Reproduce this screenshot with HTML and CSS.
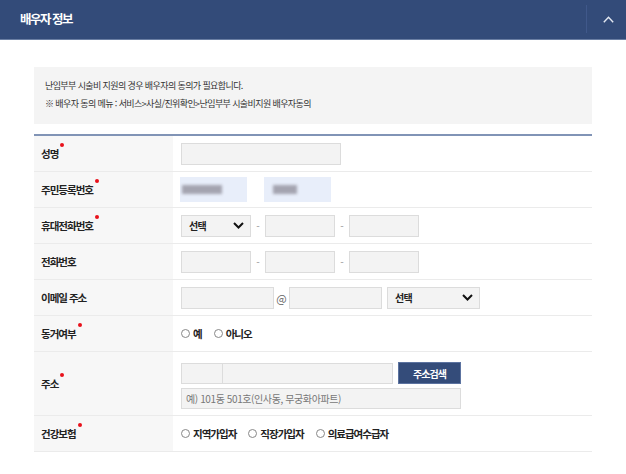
FILE: index.html
```html
<!DOCTYPE html>
<html lang="ko">
<head>
<meta charset="utf-8">
<title>배우자 정보</title>
<link rel="stylesheet" href="styles.css">
</head>
<body>
<header class="panel-head">
  <h2 class="panel-title">배우자 정보</h2>
  <div class="toggle">
    <svg width="11" height="7" viewBox="0 0 11 7"><polyline points="0.8,6.2 5.5,1.2 10.2,6.2" fill="none" stroke="#e4e9f2" stroke-width="1.4"/></svg>
  </div>
</header>
<main class="content">
  <div class="notice">
    <p>난임부부 시술비 지원의 경우 배우자의 동의가 필요합니다.</p>
    <p>※ 배우자 동의 메뉴 : 서비스&gt;사실/진위확인&gt;난임부부 시술비지원 배우자동의</p>
  </div>
  <div class="form-table">
    <div class="row">
      <div class="th"><span class="req">성명</span></div>
      <div class="td"><input class="inp w160" type="text"></div>
    </div>
    <div class="row">
      <div class="th"><span class="req">주민등록번호</span></div>
      <div class="td td-mask">
        <div class="mask"><div class="blob b1"></div></div>
        <div class="mask m2"><div class="blob b2"></div></div>
      </div>
    </div>
    <div class="row">
      <div class="th"><span class="req">휴대전화번호</span></div>
      <div class="td">
        <div class="select w70"><span>선택</span><svg width="11" height="7" viewBox="0 0 11 7"><polyline points="1,1 5.5,5.5 10,1" fill="none" stroke="#111" stroke-width="2"/></svg></div>
        <span class="dash">-</span>
        <input class="inp w70" type="text">
        <span class="dash">-</span>
        <input class="inp w70" type="text">
      </div>
    </div>
    <div class="row">
      <div class="th"><span>전화번호</span></div>
      <div class="td">
        <input class="inp w70" type="text">
        <span class="dash">-</span>
        <input class="inp w70" type="text">
        <span class="dash">-</span>
        <input class="inp w70" type="text">
      </div>
    </div>
    <div class="row">
      <div class="th"><span>이메일 주소</span></div>
      <div class="td">
        <input class="inp w93" type="text">
        <span class="at">@</span>
        <input class="inp w93" type="text">
        <div class="select w93 ml5"><span>선택</span><svg width="11" height="7" viewBox="0 0 11 7"><polyline points="1,1 5.5,5.5 10,1" fill="none" stroke="#111" stroke-width="2"/></svg></div>
      </div>
    </div>
    <div class="row">
      <div class="th"><span class="req">동거여부</span></div>
      <div class="td radios">
        <label class="radio"><span class="circle"></span>예</label>
        <label class="radio"><span class="circle"></span>아니오</label>
      </div>
    </div>
    <div class="row row-addr">
      <div class="th"><span class="req">주소</span></div>
      <div class="td addr">
        <div class="addr-line">
          <input class="inp w42" type="text"><input class="inp w171" type="text">
          <button class="btn" type="button">주소검색</button>
        </div>
        <input class="inp w280 ph" type="text" placeholder="예) 101동 501호(인사동, 무궁화아파트)">
      </div>
    </div>
    <div class="row">
      <div class="th"><span class="req">건강보험</span></div>
      <div class="td radios">
        <label class="radio"><span class="circle"></span>지역가입자</label>
        <label class="radio"><span class="circle"></span>직장가입자</label>
        <label class="radio"><span class="circle"></span>의료급여수급자</label>
      </div>
    </div>
  </div>
</main>
</body>
</html>
```

FILE: styles.css
```css
* { box-sizing: border-box; }
html, body { margin: 0; padding: 0; background: #fff; }
body {
  font-family: "Noto Sans CJK KR", "Noto Sans", sans-serif;
  color: #222;
  width: 626px;
  overflow: hidden;
}
.panel-head {
  height: 40px;
  background: #334b79;
  border-bottom: 1px solid #6a7ea3;
  display: flex;
  align-items: center;
  justify-content: space-between;
  padding-left: 20px;
}
.panel-title {
  margin: 0;
  color: #fff;
  font-size: 12.5px;
  font-weight: 700;
  letter-spacing: -1.5px;
  line-height: 1;
}
.toggle {
  width: 40px;
  height: 28px;
  border-left: 1px solid #40588a;
  display: flex;
  align-items: center;
  justify-content: center;
  padding-left: 3px;
  margin-bottom: 1px;
}
.content { padding: 27px 34px 0; }
.notice {
  background: #f4f4f4;
  height: 57px;
  padding: 10px 11px 0;
  font-size: 9px;
  letter-spacing: -0.6px;
  color: #333;
  line-height: 18px;
}
.notice p { margin: 0; }
.form-table {
  margin-top: 10px;
  border-top: 2px solid #8194b6;
}
.row {
  display: grid;
  grid-template-columns: 139px 1fr;
  height: 36px;
  border-bottom: 1px solid #ebebeb;
}
.row-addr { height: 64px; }
.th {
  background: #f7f7f7;
  display: flex;
  align-items: center;
  padding-left: 7px;
  font-size: 10.5px;
  font-weight: 700;
  letter-spacing: -1px;
  color: #222;
}
.req { position: relative; }
.req::after {
  content: "";
  position: absolute;
  right: -6px;
  top: -3px;
  width: 4px;
  height: 4px;
  border-radius: 50%;
  background: #e8111b;
}
.td {
  display: flex;
  align-items: center;
  padding-left: 8px;
}
.inp {
  height: 22px;
  border: 1px solid #dcdcdc;
  background: #f3f3f3;
  padding: 0 5px;
  margin: 0;
  font-family: inherit;
  outline: none;
}
.w160 { width: 160px; }
.w70 { width: 70px; }
.w93 { width: 93px; }
.w42 { width: 42px; }
.w171 { width: 171px; margin-left: -1px; }
.w280 { width: 280px; }
.ml5 { margin-left: 5px; }
.dash {
  width: 14px;
  text-align: center;
  color: #999;
  font-size: 10px;
}
.at {
  width: 15px;
  text-align: center;
  color: #666;
  font-size: 11px;
}
.select {
  height: 22px;
  border: 1px solid #dcdcdc;
  background: #f3f3f3;
  display: flex;
  align-items: center;
  justify-content: space-between;
  padding: 0 6px 0 7px;
  font-size: 10px;
  font-weight: 700;
  letter-spacing: -0.8px;
  color: #222;
}
.td-mask { gap: 17px; padding-left: 7px; }
.mask {
  width: 67px;
  height: 25px;
  background: #e8eefa;
  padding-top: 8px;
  overflow: hidden;
}
.blob {
  height: 9px;
  background: #a4a4b0;
  filter: blur(1.6px);
}
.b1 { width: 40px; margin-left: 2px; }
.b2 { width: 24px; margin-left: 9px; }
.radios { gap: 12px; }
.radio {
  display: flex;
  align-items: center;
  font-size: 10.5px;
  font-weight: 700;
  letter-spacing: -1px;
  color: #222;
}
.circle {
  width: 9px;
  height: 9px;
  border: 1px solid #888;
  border-radius: 50%;
  margin-right: 3px;
  background: #fff;
}
.addr {
  flex-direction: column;
  align-items: flex-start;
  justify-content: flex-start;
  padding-top: 10px;
  gap: 4px;
}
.addr-line { display: flex; align-items: center; }
.addr .inp { height: 21px; }
.btn {
  margin-left: 5px;
  width: 63px;
  height: 22px;
  background: #344c7a;
  border: 1px solid #5c73a0;
  color: #fff;
  font-family: inherit;
  font-size: 10px;
  font-weight: 700;
  letter-spacing: -1px;
  padding: 0;
}
.ph::placeholder {
  color: #777;
  font-size: 10px;
  letter-spacing: -0.4px;
}
.ph { font-size: 10px; padding-left: 4px; }
```
